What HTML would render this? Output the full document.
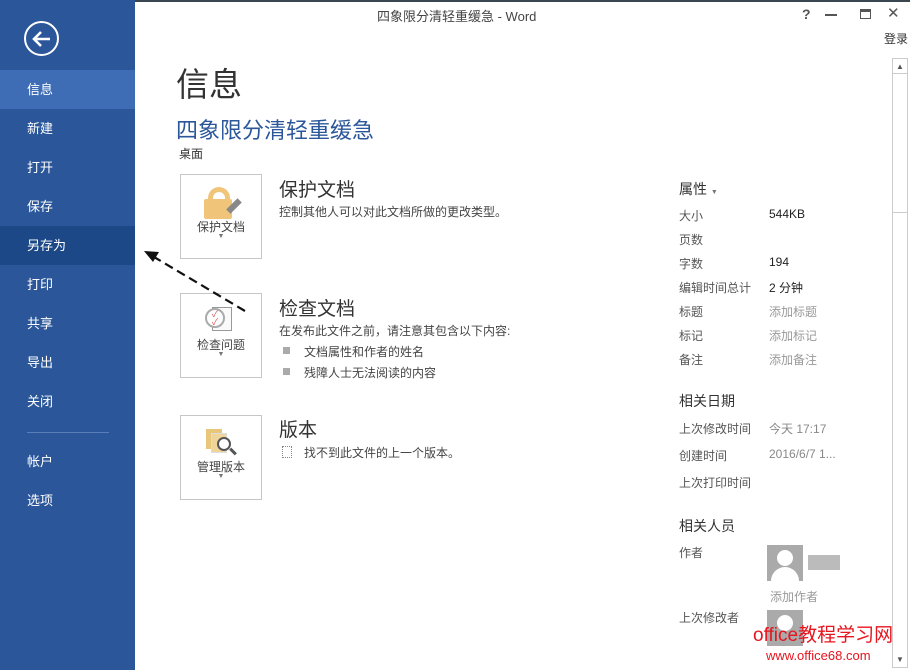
<!DOCTYPE html>
<html><head><meta charset="utf-8"><style>
*{margin:0;padding:0;box-sizing:border-box}
body{width:910px;height:670px;overflow:hidden;background:#fff;font-family:"Liberation Sans","Noto Sans CJK SC",sans-serif;position:relative;color:#444}
.a{position:absolute;white-space:nowrap}
#side{position:absolute;left:0;top:0;width:135px;height:670px;background:#2b579a}
.nav{position:absolute;left:0;width:135px;height:39px;color:#fff;font-size:13px;padding-left:27px;line-height:39px}
.box{position:absolute;left:180px;width:82px;height:85px;border:1px solid #c6c6c6;background:#fff;text-align:center;font-size:12px;color:#444}
.h2{font-size:19px;color:#333}
.s{font-size:12px;color:#444}
.l{font-size:12px;color:#555}
.g{font-size:12px;color:#999}
.k{font-size:12px;color:#222}
</style></head><body>
<div style="position:absolute;left:0;top:0;width:910px;height:2px;background:#3a4650"></div>
<div id="side">
 <div style="position:absolute;left:24px;top:21px;width:35px;height:35px;border:2px solid #fff;border-radius:50%"></div>
 <svg class="a" style="left:30px;top:28px" width="24" height="22"><path d="M4 11H20M11 4L4 11L11 18" stroke="#fff" stroke-width="2.6" fill="none"/></svg>
 <div class="nav" style="top:70px;background:#3e6db6">信息</div>
 <div class="nav" style="top:109px">新建</div>
 <div class="nav" style="top:148px">打开</div>
 <div class="nav" style="top:187px">保存</div>
 <div class="nav" style="top:226px;background:#1d4887">另存为</div>
 <div class="nav" style="top:265px">打印</div>
 <div class="nav" style="top:304px">共享</div>
 <div class="nav" style="top:343px">导出</div>
 <div class="nav" style="top:382px">关闭</div>
 <div style="position:absolute;left:27px;top:432px;width:82px;height:1px;background:#5a7fb8"></div>
 <div class="nav" style="top:442px">帐户</div>
 <div class="nav" style="top:481px">选项</div>
</div>
<div class="a" style="left:377px;top:6px;font-size:13px;color:#444">四象限分清轻重缓急 - Word</div>
<div class="a" style="left:802px;top:6px;font-size:14px;color:#555;font-weight:bold">?</div>
<div class="a" style="left:825px;top:14px;width:12px;height:2px;background:#555"></div>
<div class="a" style="left:860px;top:9px;width:11px;height:10px;border:1px solid #555;border-top-width:3px"></div>
<div class="a" style="left:887px;top:4px;font-size:15px;color:#555">✕</div>
<div class="a" style="left:884px;top:30px;font-size:12px;color:#333">登录</div>
<div class="a" style="left:892px;top:58px;width:16px;height:610px;border:1px solid #ccc;background:#fff"></div>
<div class="a" style="left:893px;top:73px;width:14px;height:1px;background:#ccc"></div>
<div class="a" style="left:893px;top:73px;width:14px;height:140px;border-bottom:1px solid #ccc"></div>
<div class="a" style="left:896px;top:62px;font-size:8px;color:#555">▲</div>
<div class="a" style="left:896px;top:655px;font-size:8px;color:#555">▼</div>
<div class="a" style="left:176px;top:58px;font-size:33px;color:#333">信息</div>
<div class="a" style="left:176px;top:113px;font-size:22px;color:#2b579a">四象限分清轻重缓急</div>
<div class="a" style="left:179px;top:145px;font-size:12px;color:#333">桌面</div>
<div class="box" style="top:174px">
 <div style="position:absolute;left:27px;top:12px;width:22px;height:22px;border:5px solid #f0c57a;border-bottom:none;border-radius:11px 11px 0 0"></div>
 <div style="position:absolute;left:23px;top:24px;width:28px;height:20px;background:#f0c57a;border-radius:2px"></div>
 <div style="position:absolute;left:45px;top:28px;width:16px;height:6px;background:#888;transform:rotate(-45deg)"></div>
 <div style="position:absolute;left:0;width:80px;top:43px">保护文档</div>
 <div style="position:absolute;left:0;width:80px;top:58px;font-size:7px;color:#777">▼</div>
</div>
<div class="a h2" style="left:279px;top:175px">保护文档</div>
<div class="a s" style="left:279px;top:203px">控制其他人可以对此文档所做的更改类型。</div>
<div class="box" style="top:293px">
 <div style="position:absolute;left:31px;top:13px;width:20px;height:24px;border:1px solid #999;background:#fafafa"></div>
 <div style="position:absolute;left:24px;top:14px;width:20px;height:20px;border:2px solid #aaa;border-radius:50%;background:#fff;font-size:9px;color:#d55;line-height:8px">✓<br>✓</div>
 <div style="position:absolute;left:0;width:80px;top:42px">检查问题</div>
 <div style="position:absolute;left:0;width:80px;top:57px;font-size:7px;color:#777">▼</div>
</div>
<div class="a h2" style="left:279px;top:294px">检查文档</div>
<div class="a s" style="left:279px;top:322px">在发布此文件之前，请注意其包含以下内容:</div>
<div class="a" style="left:283px;top:347px;width:7px;height:7px;background:#aaa"></div>
<div class="a s" style="left:304px;top:343px">文档属性和作者的姓名</div>
<div class="a" style="left:283px;top:368px;width:7px;height:7px;background:#aaa"></div>
<div class="a s" style="left:304px;top:364px">残障人士无法阅读的内容</div>
<div class="box" style="top:415px">
 <div style="position:absolute;left:25px;top:13px;width:16px;height:20px;background:#e8c77a"></div>
 <div style="position:absolute;left:30px;top:17px;width:16px;height:20px;background:#f0d59a;border:1px solid #ddd"></div>
 <div style="position:absolute;left:36px;top:21px;width:14px;height:14px;border:2px solid #555;border-radius:50%;background:#fff"></div>
 <div style="position:absolute;left:48px;top:34px;width:8px;height:3px;background:#555;transform:rotate(45deg)"></div>
 <div style="position:absolute;left:0;width:80px;top:42px">管理版本</div>
 <div style="position:absolute;left:0;width:80px;top:57px;font-size:7px;color:#777">▼</div>
</div>
<div class="a h2" style="left:279px;top:415px">版本</div>
<div class="a" style="left:282px;top:446px;width:10px;height:12px;border:1px dotted #888"></div>
<div class="a s" style="left:304px;top:444px">找不到此文件的上一个版本。</div>
<div class="a" style="left:679px;top:179px;font-size:14px;color:#333">属性 <span style="font-size:7px;color:#777">▼</span></div>
<div class="a l" style="left:679px;top:207px">大小</div><div class="a k" style="left:769px;top:207px">544KB</div>
<div class="a l" style="left:679px;top:231px">页数</div>
<div class="a l" style="left:679px;top:255px">字数</div><div class="a k" style="left:769px;top:255px">194</div>
<div class="a l" style="left:679px;top:279px">编辑时间总计</div><div class="a k" style="left:769px;top:279px">2 分钟</div>
<div class="a l" style="left:679px;top:303px">标题</div><div class="a g" style="left:769px;top:303px">添加标题</div>
<div class="a l" style="left:679px;top:327px">标记</div><div class="a g" style="left:769px;top:327px">添加标记</div>
<div class="a l" style="left:679px;top:351px">备注</div><div class="a g" style="left:769px;top:351px">添加备注</div>
<div class="a" style="left:679px;top:391px;font-size:14px;color:#333">相关日期</div>
<div class="a l" style="left:679px;top:420px">上次修改时间</div><div class="a g" style="left:769px;top:420px;color:#888">今天 17:17</div>
<div class="a l" style="left:679px;top:447px">创建时间</div><div class="a g" style="left:769px;top:447px;color:#888">2016/6/7 1...</div>
<div class="a l" style="left:679px;top:474px">上次打印时间</div>
<div class="a" style="left:679px;top:516px;font-size:14px;color:#333">相关人员</div>
<div class="a l" style="left:679px;top:544px">作者</div>
<div class="a" style="left:767px;top:545px;width:36px;height:36px;background:#aaa;overflow:hidden">
 <div style="position:absolute;left:10px;top:5px;width:16px;height:16px;border-radius:50%;background:#fff"></div>
 <div style="position:absolute;left:4px;top:22px;width:28px;height:20px;border-radius:14px 14px 0 0;background:#fff"></div>
</div>
<div class="a" style="left:808px;top:555px;width:32px;height:15px;background:#bbb"></div>
<div class="a g" style="left:770px;top:588px">添加作者</div>
<div class="a l" style="left:679px;top:609px">上次修改者</div>
<div class="a" style="left:767px;top:610px;width:36px;height:36px;background:#aaa;overflow:hidden">
 <div style="position:absolute;left:10px;top:5px;width:16px;height:16px;border-radius:50%;background:#fff"></div>
</div>
<div class="a" style="left:753px;top:620px;font-size:19px;color:#e8141e">office教程学习网</div>
<div class="a" style="left:766px;top:648px;font-size:13px;color:#e8141e">www.office68.com</div>
<svg class="a" style="left:140px;top:245px" width="110" height="70"><path d="M105 66L14 12" stroke="#111" stroke-width="2.2" stroke-dasharray="9,5"/><path d="M4 6L19 7L13 17Z" fill="#111"/></svg>
</body></html>
